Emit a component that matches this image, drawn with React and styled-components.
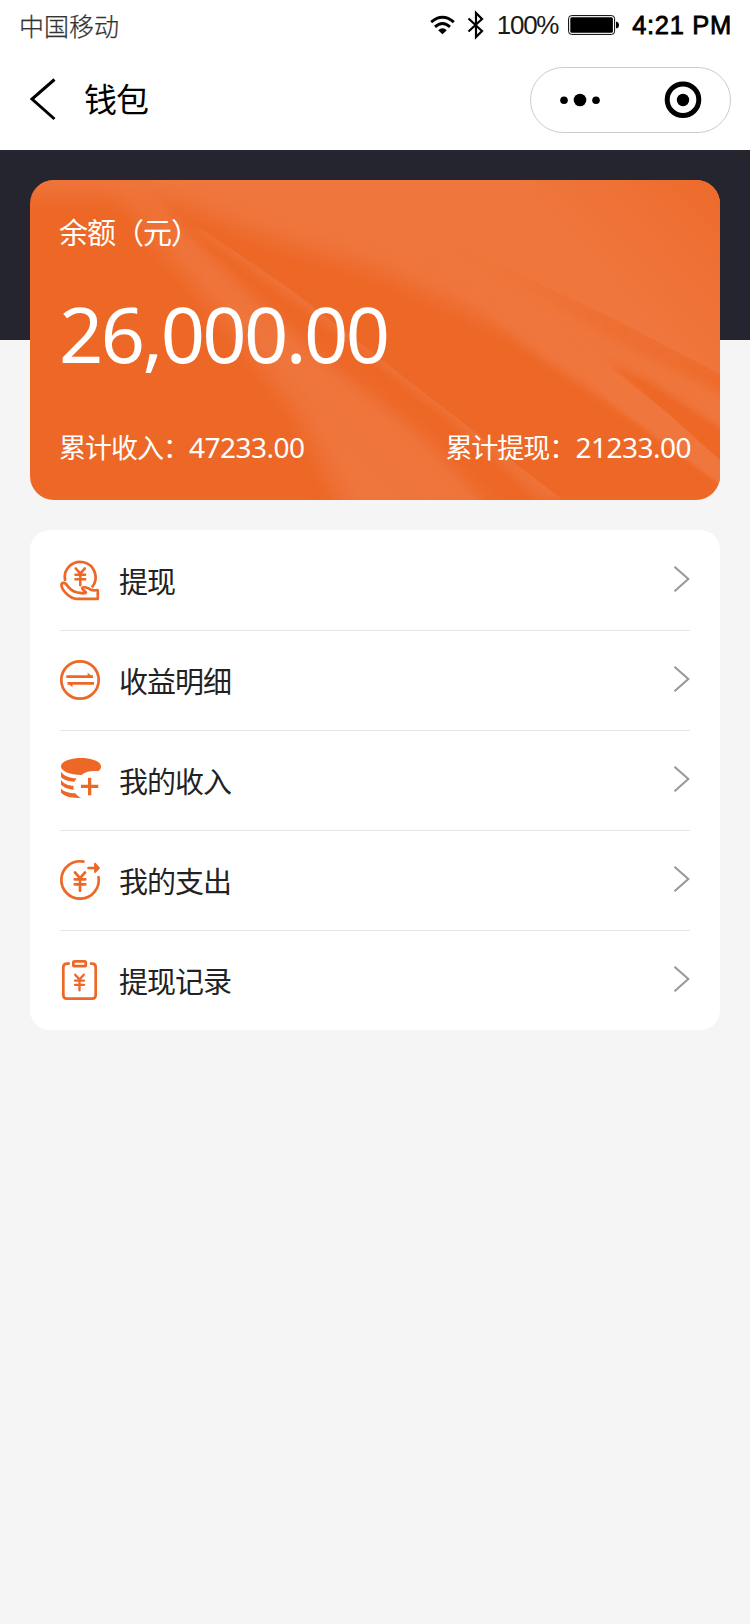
import React from 'react';
import styled, { createGlobalStyle } from 'styled-components';

const ORANGE = '#ed6726';
const GLOW = '#ef763c';

const GlobalStyle = createGlobalStyle`
  * { box-sizing: border-box; }
  body {
    margin: 0;
    background: #f5f5f5;
    font-family: "Noto Sans", "Noto Sans CJK SC", sans-serif;
  }
`;

const Page = styled.div`
  min-height: 1624px;
  background: #f5f5f5;
`;

const StatusBar = styled.header`
  display: flex;
  justify-content: space-between;
  align-items: center;
  height: 50px;
  padding: 0 18px 0 19px;
  background: #fff;
`;

const Carrier = styled.span`
  font: 300 25px/50px "Noto Sans CJK SC", sans-serif;
  -webkit-text-stroke: 0.25px #333;
  color: #333;
`;

const StatusItems = styled.div`
  display: flex;
  align-items: center;
  height: 50px;
  color: #000;
`;

const BatteryText = styled.span`
  font: 26px/50px "Liberation Sans", sans-serif;
  letter-spacing: -1.3px;
  margin: 0 10px 0 12px;
  color: #1a1a1a;
`;

const Clock = styled.span`
  font: 25.5px/50px "Liberation Sans", sans-serif;
  -webkit-text-stroke: 0.8px #000;
  letter-spacing: 0.7px;
  margin-left: 13px;
`;

const NavBar = styled.nav`
  display: flex;
  align-items: center;
  height: 100px;
  padding: 0 19px 0 29px;
  background: #fff;
`;

const Title = styled.h1`
  margin: 0 auto 5px 27px;
  font: 400 33px/48px "Noto Sans CJK SC", sans-serif;
  letter-spacing: -1px;
  color: #000;
`;

const Capsule = styled.div`
  display: flex;
  align-items: center;
  justify-content: space-between;
  width: 201px;
  height: 66px;
  padding: 0 28px 0 29px;
  border: 1px solid #ccc;
  border-radius: 33px;
`;

const Hero = styled.section`
  padding: 30px 30px 0;
  background: linear-gradient(#25252f 190px, transparent 190px);
`;

const BalanceCard = styled.div`
  position: relative;
  display: flex;
  flex-direction: column;
  height: 320px;
  padding: 0 30px;
  border-radius: 24px;
  overflow: hidden;
  background: ${ORANGE};
  color: #fff;
`;

const Waves = styled.svg`
  position: absolute;
  inset: 0;
`;

const CardLabel = styled.div`
  position: relative;
  margin: 31px 0 0 -1px;
  font: 400 29px/40px "Noto Sans CJK SC", sans-serif;
  letter-spacing: -1px;
`;

const Balance = styled.div`
  position: relative;
  margin: 32px 0 0 -1px;
  font-size: 77.5px;
  line-height: 100px;
  letter-spacing: -2.6px;
`;

const Totals = styled.div`
  position: relative;
  display: flex;
  justify-content: space-between;
  margin: 44px -1px 0 -1px;
`;

const Total = styled.div`
  display: flex;
  align-items: baseline;
  font: 400 27px/40px "Noto Sans CJK SC", sans-serif;
  letter-spacing: -1px;
`;

const Amount = styled.span`
  font: 400 28px/40px "Noto Sans", sans-serif;
  letter-spacing: -0.5px;
`;

const Menu = styled.ul`
  margin: 30px 30px 0;
  padding: 0 30px;
  list-style: none;
  border-radius: 20px;
  background: #fff;
`;

const MenuRow = styled.li`
  display: flex;
  align-items: center;
  height: 100px;

  & + & {
    box-shadow: inset 0 1px 0 #e6e6e6;
  }
`;

const MenuText = styled.span`
  flex: 1;
  margin-left: 19px;
  padding-bottom: 1px;
  font: 400 29px/40px "Noto Sans CJK SC", sans-serif;
  letter-spacing: -1px;
  color: #222;
`;

const IconBox = styled.svg`
  display: block;
  flex: none;
  overflow: visible;
`;

const RaisedIcon = styled(IconBox)`
  margin-bottom: 4px;
`;

const Chevron = styled(IconBox)`
  margin-bottom: 3px;
`;

const Yen = ({ x, y, s = 1 }) => (
  <path transform={`translate(${x} ${y}) scale(${s})`} d="M-5 -8.5L0 -2.800L5 -8.500M-5.300 -1.700H5.300M-5.300 3.300H5.300M0 -2.800V9.800" />
);

const Stroke = ({ children }) => (
  <IconBox width="40" height="40" viewBox="0 0 40 40" fill="none" stroke={ORANGE} strokeWidth="2.7" strokeLinecap="round" strokeLinejoin="round">
    {children}
  </IconBox>
);

const WithdrawIcon = () => (
  <Stroke>
    <path d="M5 20A15.400 15.400 0 1 1 32.500 26.500" />
    <Yen x={20.3} y={16.2} s={0.92} />
    <path d="M1.400 25C1.600 22.200 4.500 22.200 6.500 24.500C9 28.500 12.500 31.200 16.500 32.300C20.500 33.300 25.500 33.600 26 32.500C26.300 31.300 21.500 29.800 22.300 28C23.300 26.400 28 27.600 31 29.800C34 31.200 37.800 29.500 37.800 30.500V38.800H16.500C10.500 38.800 1.600 30.500 1.400 25Z" />
  </Stroke>
);

const DetailIcon = () => (
  <Stroke>
    <circle cx="20" cy="20" r="18.7" />
    <path strokeLinecap="butt" d="M6.300 16.700H33M7.500 23.300H34" />
    <path fill={ORANGE} stroke="none" d="M27.500 12.600L33.300 17.500H28ZM7 22.500H12.500V27.200Z" />
  </Stroke>
);

const IncomeIcon = () => (
  <RaisedIcon width="40" height="40" viewBox="0 0 40 40" fill={ORANGE}>
    <path d="M1 8.500C1 3.500 10 0 21 0S41 3.500 41 8.500C41 10.500 40 12 38 13.200C30 12.500 25 14 21.500 17C10 17 1 13 1 8.500Z" />
    <path d="M1 13.700C4 18 9 20 16.500 20.300L14.500 23.700C8 23.500 3 21.500 1 19ZM1 22C4 26 8 27.500 13.300 27.800L13.800 31.800C8 31.300 3 29 1 26.500ZM1 30.500C4 34 9 35 15.300 35.300C17 37.500 18.500 39 21.500 39.800C12 40.500 4 38.500 1 34.500Z" />
    <path d="M28 19.700H31.300V26.800H38.300V30.100H31.300V37.300H28V30.100H21V26.800H28Z" />
  </RaisedIcon>
);

const ExpenseIcon = () => (
  <Stroke>
    <path d="M23.500 1.600A18.700 18.700 0 1 0 38.500 17" />
    <Yen x={20} y={21} />
    <path d="M28.500 8H35" />
    <path d="M35 3.700V12L39 8Z" fill={ORANGE} strokeWidth="1.800" />
  </Stroke>
);

const RecordIcon = () => (
  <Stroke>
    <path d="M8.800 3.600H7Q3.300 3.600 3.300 7.300V35Q3.300 38.700 7 38.700H32Q35.700 38.700 35.700 35V7.300Q35.700 3.600 32 3.600H31" />
    <rect x="13.300" y="1.300" width="12.500" height="4.900" rx="1.300" />
    <Yen x={19.5} y={22} s={0.86} />
  </Stroke>
);

const MENU = [
  { text: '提现', Icon: WithdrawIcon },
  { text: '收益明细', Icon: DetailIcon },
  { text: '我的收入', Icon: IncomeIcon },
  { text: '我的支出', Icon: ExpenseIcon },
  { text: '提现记录', Icon: RecordIcon },
];

const WifiIcon = () => (
  <IconBox width="25" height="20" viewBox="0 0 26 20" fill="none" stroke="#000" strokeWidth="3">
    <path d="M1.200 7Q13 -3 24.800 7M5.200 12Q13 5 20.800 12" />
    <path d="M8.500 15.500Q13 11.500 17.500 15.500L13 19.500Z" fill="#000" stroke="none" />
  </IconBox>
);

const BluetoothIcon = styled(IconBox)`
  margin-left: 12px;
`;

const CardWaves = () => (
  <Waves width="690" height="320" viewBox="0 0 690 320">
    <defs>
      <clipPath id="ribbonSide">
        <path d="M-30 -30H80L125 10L163 43L260 109L352 180L533 320V350H-30Z" />
      </clipPath>
      <clipPath id="aboveCrease">
        <path d="M400 55L563 173L640 235L690 280H720V0H400Z" />
      </clipPath>
      <clipPath id="belowFold">
        <path d="M380 48L480 90L580 137L690 194V330H380Z" />
      </clipPath>
      <linearGradient id="corner" gradientUnits="userSpaceOnUse" x1="690" y1="0" x2="580" y2="100">
        <stop offset="0" stopColor={ORANGE} stopOpacity="0.75" />
        <stop offset="1" stopColor={ORANGE} stopOpacity="0" />
      </linearGradient>
      <linearGradient id="foldFade" gradientUnits="userSpaceOnUse" x1="400" y1="50" x2="690" y2="200">
        <stop offset="0" stopColor={ORANGE} stopOpacity="0" />
        <stop offset="0.5" stopColor={ORANGE} stopOpacity="0.4" />
        <stop offset="1" stopColor={ORANGE} stopOpacity="0.7" />
      </linearGradient>
      <filter id="blurWide" x="-20%" y="-30%" width="140%" height="160%"><feGaussianBlur stdDeviation="11" /></filter>
      <filter id="blurMid" x="-20%" y="-30%" width="140%" height="160%"><feGaussianBlur stdDeviation="5" /></filter>
      <filter id="blurFine" x="-20%" y="-30%" width="140%" height="160%"><feGaussianBlur stdDeviation="1.500" /></filter>
    </defs>

    <path d="M-30 -30H740V290L690 275L600 215L545 184L490 156L440 132L390 109L345 89L240 58L150 24L80 14L-30 14Z" fill={GLOW} filter="url(#blurWide)" />
    <path d="M400 85L520 135L563 165L640 227L710 290V316L640 264L560 210L500 168Z" fill={GLOW} filter="url(#blurMid)" />
    <path d="M540 163L563 171L640 235L700 288V311L605 241L570 212Z" fill={GLOW} filter="url(#blurFine)" />

    <g clipPath="url(#aboveCrease)">
      <path d="M575 180L625 205L710 262V310L640 240Z" fill={ORANGE} filter="url(#blurMid)" />
      <path d="M590 190L640 219L710 262V300L650 245Z" fill={ORANGE} filter="url(#blurFine)" opacity="0.7" />
    </g>
    <g clipPath="url(#belowFold)">
      <path d="M420 60L580 134L700 194V218L580 158Z" fill="url(#foldFade)" filter="url(#blurMid)" />
    </g>
    <path d="M420 0H690V240Z" fill="url(#corner)" />

    <g clipPath="url(#ribbonSide)">
      <path d="M70 -20L115 15L160 62L220 120L290 180L345 220L400 265L470 340H320L270 235L200 145L130 65Z" fill={GLOW} filter="url(#blurWide)" />
      <path d="M110 5L150 46L220 115L290 180L345 222L400 268L455 330H400L320 255L230 165L150 75Z" fill={GLOW} filter="url(#blurMid)" opacity="0.6" />
      <path d="M160 46L240 104L340 178L420 240L510 320L560 320L352 160L200 50Z" fill={GLOW} filter="url(#blurMid)" opacity="0.75" />
    </g>
  </Waves>
);

export default function App() {
  return (
    <Page>
      <GlobalStyle />
      <StatusBar>
        <Carrier>中国移动</Carrier>
        <StatusItems>
          <WifiIcon />
          <BluetoothIcon width="18" height="28" viewBox="0 0 18 28" fill="none" stroke="#000" strokeWidth="2.200">
            <path d="M1.500 7.500L15 20L9 26V2L15 8L1.500 20.500" />
          </BluetoothIcon>
          <BatteryText>100%</BatteryText>
          <IconBox width="51" height="20" viewBox="0 0 51 20">
            <rect x="0.600" y="0.600" width="46" height="18.800" rx="3" fill="none" stroke="#000" strokeWidth="1" />
            <rect x="2.300" y="2.300" width="42.600" height="15.400" rx="1.500" />
            <path d="M48 6.500Q51 7 51 10T48 13.500Z" />
          </IconBox>
          <Clock>4:21 PM</Clock>
        </StatusItems>
      </StatusBar>
      <NavBar>
        <IconBox width="28" height="42" viewBox="0 0 28 42" fill="none" stroke="#000" strokeWidth="3">
          <path d="M25.500 0.500L3 20L25.500 40" />
        </IconBox>
        <Title>钱包</Title>
        <Capsule>
          <IconBox width="40" height="14" viewBox="0 0 40 14">
            <circle cx="4" cy="7.300" r="3.800" />
            <circle cx="20" cy="7" r="6.300" />
            <circle cx="36" cy="7.300" r="3.800" />
          </IconBox>
          <IconBox width="38" height="38" viewBox="0 0 38 38">
            <circle cx="19" cy="18.700" r="15.800" fill="none" stroke="#000" strokeWidth="5" />
            <circle cx="19" cy="19" r="6.200" />
          </IconBox>
        </Capsule>
      </NavBar>
      <Hero>
        <BalanceCard>
          <CardWaves />
          <CardLabel>余额（元）</CardLabel>
          <Balance>26,000.00</Balance>
          <Totals>
            <Total>累计收入：<Amount>47233.00</Amount></Total>
            <Total>累计提现：<Amount>21233.00</Amount></Total>
          </Totals>
        </BalanceCard>
      </Hero>
      <Menu>
        {MENU.map(({ text, Icon }) => (
          <MenuRow key={text}>
            <Icon />
            <MenuText>{text}</MenuText>
            <Chevron width="16" height="26" viewBox="0 0 16 26" fill="none" stroke="#999" strokeWidth="2.100">
              <path d="M0.500 0.700L14.300 13L0.500 25.300" />
            </Chevron>
          </MenuRow>
        ))}
      </Menu>
    </Page>
  );
}
